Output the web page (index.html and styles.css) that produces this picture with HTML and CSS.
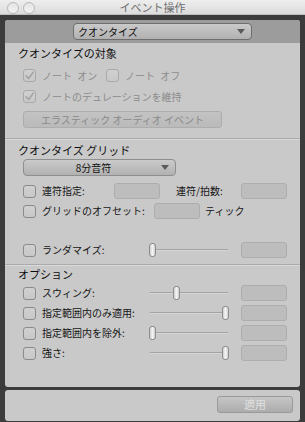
FILE: index.html
```html
<!DOCTYPE html>
<html lang="ja">
<head>
<meta charset="utf-8">
<title>イベント操作</title>
<link rel="stylesheet" href="styles.css">
</head>
<body>
<div class="titlebar">
  <div class="lights"><span class="light"></span><span class="light"></span></div>
  <div class="title">イベント操作</div>
  <div></div>
</div>
<div class="frame">
  <div class="panel main">
    <div class="head">
      <div class="popup big"><span class="ptext">クオンタイズ</span><span class="arrow"></span></div>
    </div>

    <div class="section s1">
      <div class="heading">クオンタイズの対象</div>
      <div class="row r21 first">
        <label class="check disabled w83 spaced"><span class="box on"><svg viewBox="0 0 13 13" width="13" height="13"><path d="M3 6.8 L5.6 9.4 L10.2 3.2" fill="none" stroke="#a4a4a4" stroke-width="1.6" stroke-linecap="round" stroke-linejoin="round"/></svg></span>ノート オン</label>
        <label class="check disabled spaced"><span class="box"></span>ノート オフ</label>
      </div>
      <div class="row r21">
        <label class="check disabled"><span class="box on"><svg viewBox="0 0 13 13" width="13" height="13"><path d="M3 6.8 L5.6 9.4 L10.2 3.2" fill="none" stroke="#a4a4a4" stroke-width="1.6" stroke-linecap="round" stroke-linejoin="round"/></svg></span>ノートのデュレーションを維持</label>
      </div>
      <div class="btn elastic">エラスティック オーディオ イベント</div>
    </div>

    <div class="section s2">
      <div class="heading">クオンタイズ グリッド</div>
      <div class="popup grid"><span class="ptext">8分音符</span><span class="arrow"></span></div>
      <div class="row r20 tuplet">
        <label class="check w91"><span class="box"></span>連符指定:</label>
        <span class="field"></span>
        <span class="lbl w65">連符/拍数:</span>
        <span class="field"></span>
      </div>
      <div class="row r20">
        <label class="check w131"><span class="box"></span>グリッドのオフセット:</label>
        <span class="field"></span>
        <span class="unit">ティック</span>
      </div>
      <div class="row r20 random">
        <label class="check w127"><span class="box"></span>ランダマイズ:</label>
        <span class="slider"><span class="thumb" style="left:-1px"></span></span>
        <span class="field"></span>
      </div>
    </div>

    <div class="section s3">
      <div class="heading">オプション</div>
      <div class="row r20 first">
        <label class="check w127"><span class="box"></span>スウィング:</label>
        <span class="slider"><span class="thumb" style="left:23px"></span></span>
        <span class="field"></span>
      </div>
      <div class="row r20">
        <label class="check w127"><span class="box"></span>指定範囲内のみ適用:</label>
        <span class="slider"><span class="thumb" style="left:72px"></span></span>
        <span class="field"></span>
      </div>
      <div class="row r20">
        <label class="check w127"><span class="box"></span>指定範囲内を除外:</label>
        <span class="slider"><span class="thumb" style="left:-1px"></span></span>
        <span class="field"></span>
      </div>
      <div class="row r20">
        <label class="check w127"><span class="box"></span>強さ:</label>
        <span class="slider"><span class="thumb" style="left:72px"></span></span>
        <span class="field"></span>
      </div>
    </div>
  </div>

  <div class="panel footer">
    <div class="btn apply">適用</div>
  </div>
</div>
</body>
</html>
```

FILE: styles.css
```css
* { box-sizing: border-box; }
html, body {
  margin: 0;
  padding: 0;
  width: 305px;
  height: 422px;
  overflow: hidden;
  background: #3c3c3c;
  font-family: "Noto Sans CJK JP", "Noto Sans", sans-serif;
  font-size: 10px;
  color: #151515;
}

.titlebar {
  height: 15px;
  display: grid;
  grid-template-columns: 1fr auto 1fr;
  align-items: center;
  background: linear-gradient(#eeeeee, #dcdcdc);
  border-bottom: 1px solid #bdbdbd;
}
.lights {
  display: flex;
  gap: 4px;
  padding-left: 7px;
}
.light {
  width: 12px;
  height: 12px;
  border-radius: 50%;
  border: 1px solid #b9b9b9;
  background: linear-gradient(#e4e4e4, #f4f4f4);
}
.title {
  font-size: 11px;
  line-height: 15px;
  color: #6e6e6e;
}

.frame {
  padding: 5px 5px 1px 5px;
  height: 407px;
  display: flex;
  flex-direction: column;
  gap: 3px;
}
.panel {
  background: #c9c9c9;
  border-radius: 3px;
  overflow: hidden;
}
.main { height: 367px; }
.footer {
  height: 31px;
  display: flex;
  justify-content: flex-end;
  align-items: flex-start;
  padding: 6px 7px 0 0;
}

.head {
  height: 23px;
  background: #9c9c9c;
  display: flex;
  align-items: center;
  padding-left: 68px;
}

.popup {
  display: flex;
  align-items: center;
  height: 17px;
  border-radius: 4px;
  background: linear-gradient(#cacaca, #b1b1b1);
  position: relative;
  color: #111;
  font-size: 10px;
}
.popup.big {
  width: 179px;
  border: 1px solid #6e6e6e;
  padding-left: 4px;
}
.popup.grid {
  width: 153px;
  margin: 2px 0 0 5px;
  border: 1px solid #8e8e8e;
  justify-content: center;
  padding-right: 12px;
}
.ptext { line-height: 15px; }
.arrow {
  position: absolute;
  right: 6px;
  top: 5px;
  width: 0;
  height: 0;
  border-left: 4px solid transparent;
  border-right: 4px solid transparent;
  border-top: 5px solid #5a5a5a;
}

.section { padding-left: 13px; }
.section + .section {
  border-top: 1px solid #ababab;
  box-shadow: inset 0 1px 0 #d9d9d9;
}
.s1 { padding-top: 3px; padding-bottom: 10px; }
.s2 { padding-top: 4px; padding-bottom: 4px; }
.s3 { padding-top: 2px; }

.heading {
  font-size: 11px;
  line-height: 14px;
  color: #0d0d0d;
}

.row {
  display: flex;
  align-items: center;
  padding-left: 5px;
}
.r21 { height: 21px; }
.r20 { height: 20px; }
.s1 .first { margin-top: 5px; }
.tuplet { margin-top: 5px; }
.random { margin-top: 19px; }
.s3 .first { margin-top: 2px; }

.check {
  display: flex;
  align-items: center;
  gap: 6px;
  flex: none;
  white-space: pre;
  line-height: 14px;
}
.check.disabled { color: #8c8c8c; }
.spaced { word-spacing: 3px; }
.w83 { width: 83px; }
.w91 { width: 91px; }
.w127 { width: 127px; }
.w131 { width: 131px; }
.w65 { width: 65px; flex: none; }

.box {
  width: 13px;
  height: 13px;
  flex: none;
  border: 1px solid #8b8b8b;
  border-radius: 3px;
  background: linear-gradient(#d0d0d0, #c8c8c8);
  display: flex;
  align-items: center;
  justify-content: center;
}
.disabled .box { border-color: #a9a9a9; }
.box svg { display: block; flex: none; margin: -1px; }

.field {
  width: 46px;
  height: 16px;
  flex: none;
  border: 1px solid #adadad;
  border-radius: 3px;
  background: #bdbdbd;
}
.tuplet .lbl { margin-left: 16px; line-height: 14px; }
.unit { margin-left: 5px; line-height: 14px; }

.slider {
  position: relative;
  width: 78px;
  height: 16px;
  flex: none;
  margin-right: 13px;
}
.slider::before {
  content: "";
  position: absolute;
  left: 0;
  right: 0;
  top: 7px;
  height: 1px;
  background: #a3a3a3;
  box-shadow: 0 1px 0 #d6d6d6;
}
.thumb {
  position: absolute;
  top: 1px;
  width: 7px;
  height: 14px;
  border: 1px solid #8d8d8d;
  border-radius: 3px;
  background: linear-gradient(90deg, #cfcfcf, #f4f4f4 50%, #cfcfcf);
}

.btn {
  height: 17px;
  border-radius: 3px;
  display: flex;
  align-items: center;
  justify-content: center;
  line-height: 15px;
}
.elastic {
  width: 199px;
  margin: 4px 0 0 5px;
  border: 1px solid #adadad;
  background: linear-gradient(#c3c3c3, #bababa);
  color: #8a8a8a;
}
.apply {
  width: 76px;
  border: 1px solid #9a9a9a;
  background: linear-gradient(#c6c6c6, #acacac);
  color: #e0e0e0;
  font-size: 11px;
}
```
